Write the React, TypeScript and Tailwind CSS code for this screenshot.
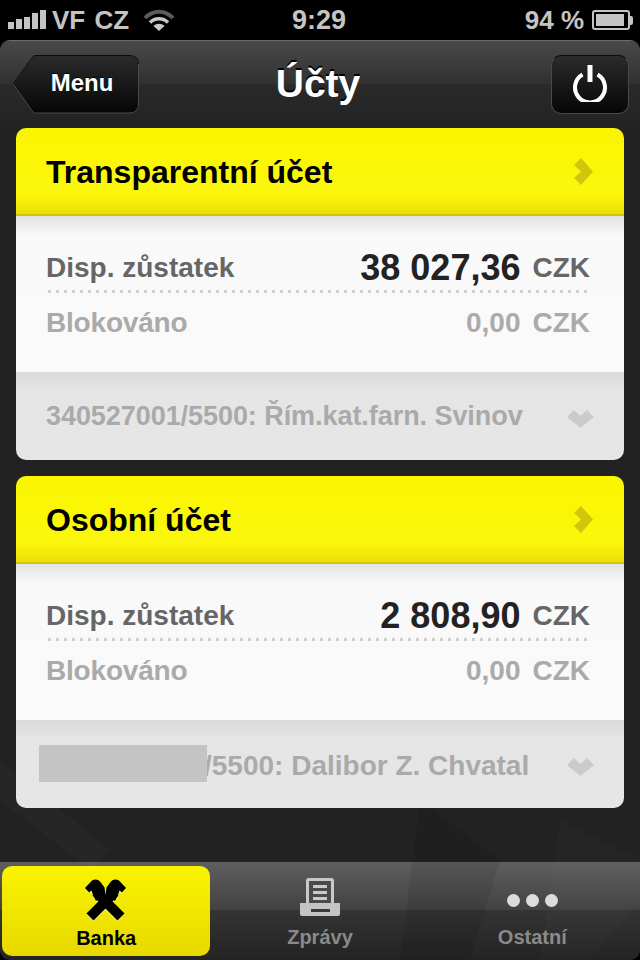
import React from 'react';

const SignalBars = () => (
    <div className="flex items-end gap-[2px] h-[20px] ml-[8px] -mt-[2px]">
        <div className="w-[6px] h-[7px] bg-[#c4c4c4]" />
        <div className="w-[6px] h-[10px] bg-[#c4c4c4]" />
        <div className="w-[6px] h-[12px] bg-[#c4c4c4]" />
        <div className="w-[6px] h-[16px] bg-[#c4c4c4]" />
        <div className="w-[6px] h-[19px] bg-[#c4c4c4]" />
    </div>
);

const Wifi = () => (
    <svg width="32" height="24" viewBox="0 0 32 24" fill="none" className="ml-[14px]">
        <path d="M2 10 C10 1.5 22 1.5 30 10" stroke="#5c5c5c" strokeWidth="4" />
        <path d="M7 14.5 C12 9.5 20 9.5 25 14.5" stroke="#c8c8c8" strokeWidth="3.4" />
        <path d="M16 23 L10.5 18 C13.5 15 18.5 15 21.5 18 Z" fill="#c8c8c8" />
    </svg>
);

const Battery = () => (
    <div className="flex items-center">
        <div className="w-[38px] h-[20px] border-2 border-[#c4c4c4] rounded-[3px] p-[2px]">
            <div className="h-full w-[93%] bg-[#c4c4c4]" />
        </div>
        <div className="w-[3px] h-[9px] bg-[#c4c4c4] rounded-r-[2px]" />
    </div>
);

const StatusBar = () => (
    <div className="h-[40px] bg-black flex items-center justify-between text-[26px] font-bold text-[#c4c4c4] leading-none shrink-0 relative">
        <div className="flex items-center">
            <SignalBars />
            <span className="ml-[6px] [word-spacing:2px]">VF CZ</span>
            <Wifi />
        </div>
        <span className="absolute left-[292px] text-[27px]">9:29</span>
        <div className="flex items-center gap-[8px] mr-[7px]">
            <span>94 %</span>
            <Battery />
        </div>
    </div>
);

const MenuButton = () => (
    <div className="relative w-[127px] h-[59px] flex items-center justify-center pl-[13px] pb-[3px]">
        <svg className="absolute inset-0" width="127" height="59" viewBox="0 0 127 59">
            <defs>
                <linearGradient id="menuFill" x1="0" y1="0" x2="0" y2="1">
                    <stop offset="0" stopColor="#2b2b2b" />
                    <stop offset="1" stopColor="#060606" />
                </linearGradient>
            </defs>
            <path d="M1 29 L21 1.5 Q22 .5 24 .5 L117 .5 Q126.500 .5 126.500 9 L126.500 49 Q126.500 58 117 58 L24 58 Q22 58 21 57 Z" fill="url(#menuFill)" stroke="#4a4a4a" />
            <path d="M1 29 L21 1.5 Q22 .5 24 .5 L117 .5 Q126.500 .5 126.500 9" fill="none" stroke="#0a0a0a" />
        </svg>
        <span className="relative text-[24px] font-bold text-white leading-none [text-shadow:0_-1px_0_#000]">Menu</span>
    </div>
);

const PowerButton = () => (
    <div className="w-[78px] h-[59px] rounded-[10px] border border-[#4a4a4a] border-t-[#0a0a0a] bg-[linear-gradient(#2b2b2b,#060606)] flex items-center justify-center pb-[4px]">
        <svg width="36" height="38" viewBox="0 0 36 38" fill="none" stroke="#fff">
            <path d="M10.500 10.500 A15 15 0 1 0 25.500 10.500" strokeWidth="4" strokeLinecap="butt" />
            <path d="M18 1 L18 18" strokeWidth="5" />
        </svg>
    </div>
);

const NavBar = () => (
    <div className="relative h-[88px] shrink-0 border-t border-[#6a6a6a] bg-[linear-gradient(#494949,#303030_50%,#2a2a2a_50%,#232323)] flex items-start justify-between pl-[12px] pr-[11px] pt-[14px]">
        <MenuButton />
        <h1 className="absolute left-0 right-0 top-[20px] pr-[4px] text-center text-[39px] font-bold text-white leading-[46px] [text-shadow:0_-2px_0_#000]">Účty</h1>
        <PowerButton />
    </div>
);

const ChevronRight = () => (
    <svg width="20" height="28" viewBox="0 0 20 28" className="shrink-0">
        <path d="M0 7 L7 0 L19 13.500 L7 27 L0 20 L7 13.500 Z" fill="#d2c60c" />
    </svg>
);

const ChevronDown = () => (
    <svg width="27" height="19" viewBox="0 0 27 19" className="shrink-0 mt-[5px]">
        <path d="M0 7 L7 0 L13.500 6 L20 0 L27 7 L13.500 18 Z" fill="#cbcbcb" />
    </svg>
);

interface AccountCardProps {
    title: string;
    balance: string;
    children: React.ReactNode;
}

const AccountCard: React.FC<AccountCardProps> = ({ title, balance, children }) => (
    <div className="h-[332px] rounded-[10px] overflow-hidden flex flex-col relative">
        <div className="h-[88px] shrink-0 border-b-2 border-[#d4c408] bg-[linear-gradient(#faf600,#fbf60d_78%,#ebe004)] flex items-center justify-between pl-[30px] pr-[30px] pt-[2px]">
            <span className="text-[32px] font-bold text-black leading-none">{title}</span>
            <ChevronRight />
        </div>
        <div className="h-[156px] shrink-0 bg-[linear-gradient(#e3e3e3,#f9f9f9_20px,#fafafa)] pt-[31px] pl-[30px] pr-[34px] flex flex-col">
            <div className="flex items-center justify-between h-[44px] -mt-[1px]">
                <span className="text-[28px] font-bold text-[#666] leading-none">Disp. zůstatek</span>
                <div className="flex items-center">
                    <span className="text-[36px] font-bold text-[#222] leading-none">{balance}</span>
                    <span className="text-[28px] font-bold text-[#666] leading-none ml-[12px]">CZK</span>
                </div>
            </div>
            <div className="h-[3px] ml-[2px] shrink-0 bg-[repeating-linear-gradient(90deg,#cfcfcf_0,#cfcfcf_3px,transparent_3px,transparent_8px)]" />
            <div className="flex items-center justify-between h-[44px] mt-[8px]">
                <span className="text-[28px] font-bold text-[#aaa] leading-none tracking-[-0.2px]">Blokováno</span>
                <div className="flex items-center">
                    <span className="text-[28px] font-bold text-[#aaa] leading-none">0,00</span>
                    <span className="text-[28px] font-bold text-[#aaa] leading-none ml-[12px]">CZK</span>
                </div>
            </div>
        </div>
        <div className="flex-1 bg-[linear-gradient(#dadada,#e5e5e5_20px,#e6e6e6)] flex items-center justify-between pl-[30px] pr-[30px] pt-[1px]">
            {children}
            <ChevronDown />
        </div>
    </div>
);

const BankLogo = () => (
    <svg width="44" height="46" viewBox="0 0 44 46" className="drop-shadow-[0_1px_0_#fff68a]">
        <path d="M6 40 L31 15" stroke="#000" strokeWidth="10" />
        <path d="M37 40 L12 15" stroke="#000" strokeWidth="10" />
        <path d="M1 11 L8 3.500 Q13 1 16.500 5 L20.500 10.500 L21.500 18 L12 24 L9 18 L7.500 13.500 L5 15.500 Z" fill="#000" />
        <path d="M42 11 L35 3.500 Q30 1 26.500 5 L22.500 10.500 L21.500 18 L31 24 L34 18 L35.500 13.500 L38 15.500 Z" fill="#000" />
    </svg>
);

const PrinterIcon = () => (
    <svg width="60" height="60" viewBox="0 0 60 60" className="-my-[6px]">
        <path d="M16 13 Q16 10 19 10 L41 10 Q44 10 44 13 L44 35 L16 35 Z" fill="#c9c9c9" />
        <rect x="19" y="13" width="22" height="22" fill="#4a4a4a" />
        <rect x="23" y="17" width="14" height="3" fill="#c9c9c9" />
        <rect x="23" y="23" width="14" height="3" fill="#c9c9c9" />
        <rect x="23" y="29" width="14" height="3" fill="#c9c9c9" />
        <path d="M10 35 L50 35 L50 46 Q50 48 48 48 L12 48 Q10 48 10 46 Z" fill="#c4c4c4" />
        <rect x="21" y="41" width="19" height="3" fill="#3a3a3a" />
    </svg>
);

const TabBar = () => (
    <div className="h-[98px] shrink-0 grid grid-cols-3 bg-[linear-gradient(#5e5e5e,#424242_49%,#343434_49%,#232323)]">
        <div className="pl-[2px] pr-[3px] py-[4px]">
            <div className="h-full rounded-[10px] border-t border-[#fff200] bg-[linear-gradient(#f9f400,#e9d800)] flex flex-col items-center justify-start pt-[10px] gap-[5px]">
                <BankLogo />
                <span className="text-[20px] font-bold text-black leading-none">Banka</span>
            </div>
        </div>
        <div className="flex flex-col items-center justify-start gap-[5px] pt-[12px]">
            <PrinterIcon />
            <span className="text-[20px] font-bold text-[#8a8a8a] leading-none">Zprávy</span>
        </div>
        <div className="flex flex-col items-center justify-start pt-[12px] pr-[2px]">
            <div className="flex gap-[6px] h-[48px] items-center mt-[2px]">
                <div className="w-[13px] h-[13px] rounded-full bg-[#dcdcdc]" />
                <div className="w-[13px] h-[13px] rounded-full bg-[#dcdcdc]" />
                <div className="w-[13px] h-[13px] rounded-full bg-[#dcdcdc]" />
            </div>
            <span className="text-[20px] font-bold text-[#8a8a8a] leading-none mt-[3px]">Ostatní</span>
        </div>
    </div>
);

// faint diagonal shapes behind the cards
const BackdropPattern = () => (
    <svg className="absolute inset-0" width="640" height="920" viewBox="0 0 640 920">
        <path d="M200 0 L250 0 L150 160 L100 160 Z" fill="#fff" opacity="0.025" />
        <path d="M0 720 L110 810 L90 830 L0 760 Z" fill="#fff" opacity="0.02" />
        <path d="M420 760 L500 820 L470 920 L400 920 Z" fill="#000" opacity="0.08" />
        <path d="M560 780 L640 820 L640 860 L590 920 L540 920 Z" fill="#fff" opacity="0.015" />
    </svg>
);

function App() {
    return (
        <div className="w-[640px] h-[960px] bg-black flex flex-col overflow-hidden font-['Liberation_Sans',Arial,sans-serif]">
            <StatusBar />
            <div className="relative flex-1 flex flex-col rounded-[10px] overflow-hidden bg-[#222]">
                <BackdropPattern />
                <NavBar />
                <div className="relative flex-1 px-[16px] flex flex-col gap-[16px]">
                    <AccountCard title="Transparentní účet" balance="38 027,36">
                        <span className="text-[27px] tracking-[-0.06px] font-bold text-[#aaa] leading-none whitespace-nowrap">
                            340527001/5500: Řím.kat.farn. Svinov
                        </span>
                    </AccountCard>
                    <AccountCard title="Osobní účet" balance="2 808,90">
                        <span className="flex items-center text-[28px] font-bold text-[#aaa] leading-none whitespace-nowrap pt-[2px]">
                            <span className="relative z-10 w-[168px] h-[37px] -ml-[7px] -mr-[3px] -mt-[5px] bg-[#c4c4c4]" />
                            /5500: Dalibor Z. Chvatal
                        </span>
                    </AccountCard>
                </div>
                <TabBar />
            </div>
        </div>
    );
}

export default App;
